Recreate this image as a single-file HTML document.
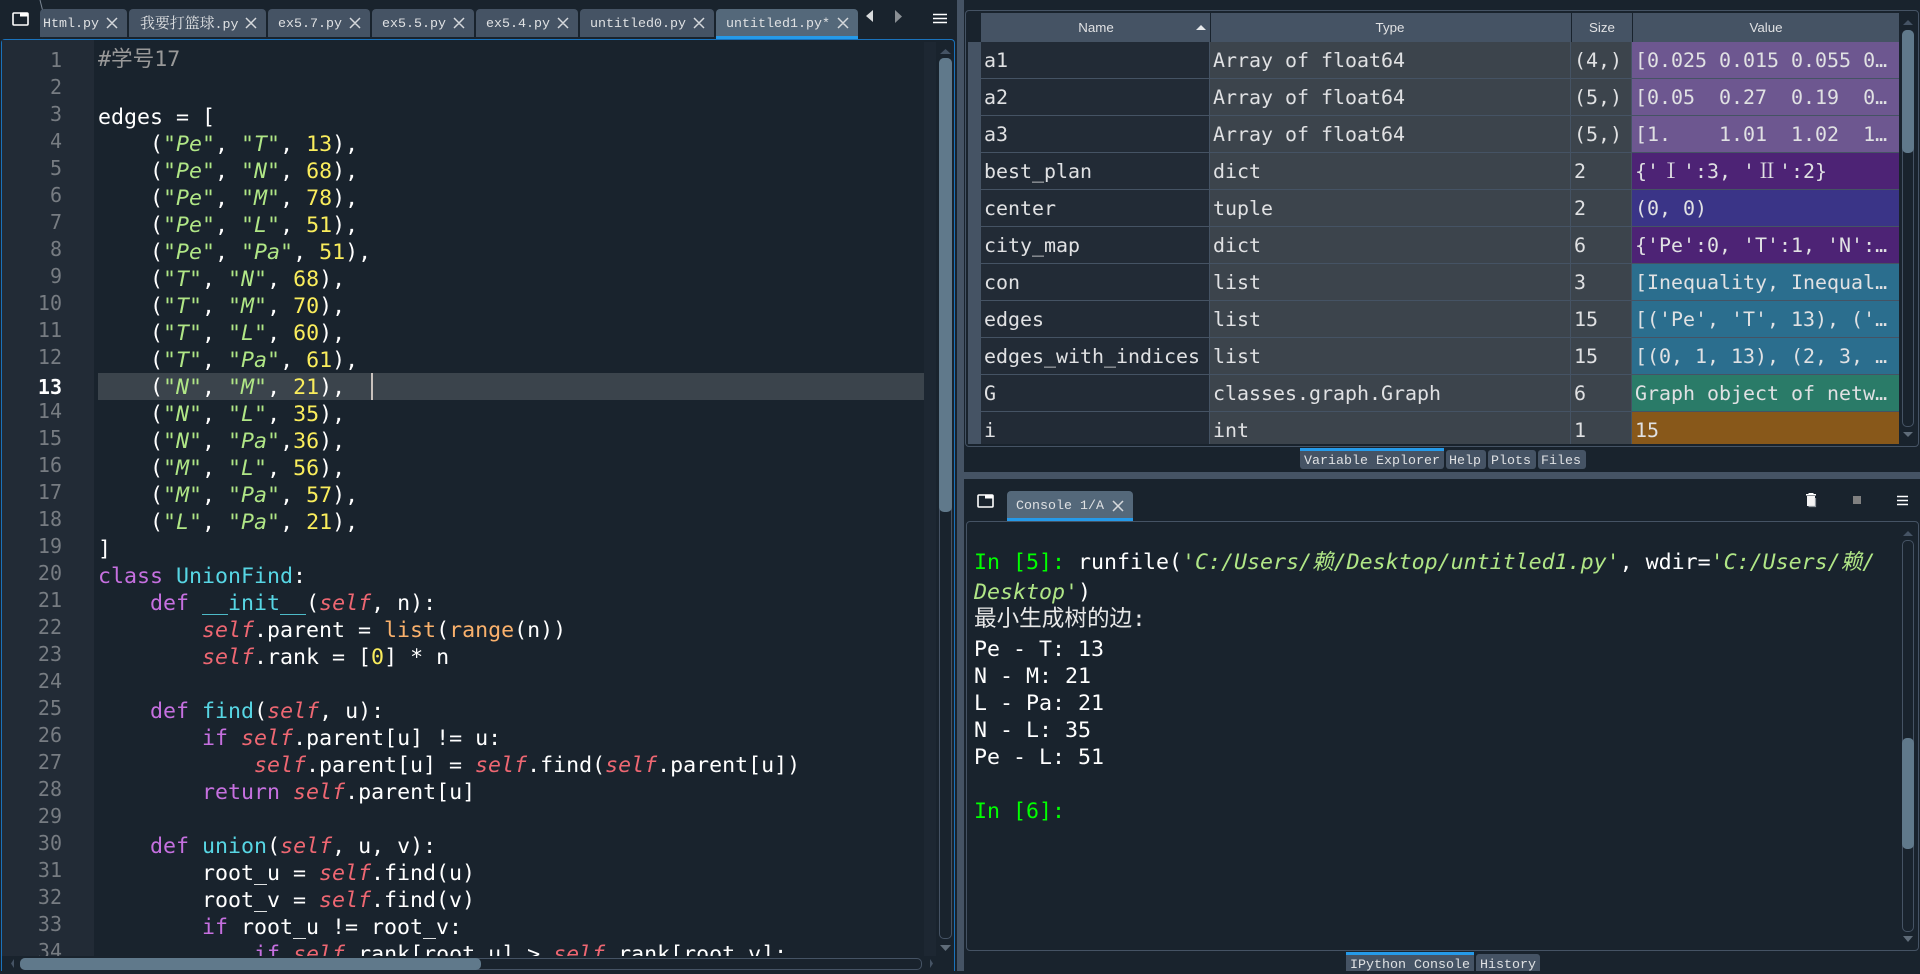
<!DOCTYPE html>
<html><head><meta charset="utf-8"><title>Spyder</title>
<style>
html,body{margin:0;padding:0;background:#19232d;width:1920px;height:971px;overflow:hidden}
.a{position:absolute}
.tab{position:absolute;top:9px;height:28px;background:#455364;border-radius:4px 4px 0 0}
.tt{position:absolute;font:13.33px/16px "Liberation Mono","Noto Serif CJK SC",monospace;color:#dfe1e3;white-space:pre;top:17px}
.btt{position:absolute;font:13.33px/16px "Liberation Mono",monospace;color:#dfe1e3;white-space:pre}
.code{position:absolute;left:98px;top:46px;margin:0;font:21.6px/27px "DejaVu Sans Mono","Noto Sans CJK SC",monospace;color:#fff;white-space:pre}
.ln{position:absolute;left:6px;width:56px;top:46px;margin:0;text-align:right;font:20px/27px "DejaVu Sans Mono",monospace;color:#777c82;white-space:pre}
.k{color:#c670e0}.d{color:#57d6e4}.s{color:#b0e686;font-style:italic}.n{color:#faed5c}.i{color:#ee6772;font-style:italic}.b{color:#fab16c}.c{color:#999}
.cell{position:absolute;font:19.95px/37px "DejaVu Sans Mono",monospace;color:#e0e1e3;white-space:pre}
.rom{display:inline-block;width:24px;text-align:center;font-family:'Noto Serif CJK SC',serif;font-size:21px;line-height:30px}
.hd{position:absolute;top:20px;font:13.33px/16px "Liberation Sans",sans-serif;color:#e0e1e3;transform:translateX(-50%)}
.con{position:absolute;left:974px;font:21.6px/27px "DejaVu Sans Mono","Noto Sans CJK SC",monospace;color:#fff;white-space:pre}
.g{color:#00ff00}
.sb{position:absolute;box-sizing:border-box;border:1px solid #455364;border-radius:5px}
.th{position:absolute;background:#60798b;border-radius:5px}
svg{position:absolute}
</style></head><body>

<!-- top-left pane icon -->
<svg style="left:12px;top:12px" width="17" height="14"><rect x="1" y="1" width="15" height="12" fill="none" stroke="#fff" stroke-width="1.6" rx="1"/><rect x="8" y="1" width="8" height="3.5" fill="#fff"/></svg>
<svg style="left:39px;top:0" width="6" height="38"><path d="M1 0 L4 12 L2 26 L4 37" fill="none" stroke="#7b8794" stroke-width="1"/></svg>

<!-- tabs -->
<div class="tab" style="left:40px;width:87px"></div>
<div class="tab" style="left:129px;width:137px"></div>
<div class="tab" style="left:268px;width:102px"></div>
<div class="tab" style="left:372px;width:102px"></div>
<div class="tab" style="left:476px;width:102px"></div>
<div class="tab" style="left:580px;width:134px"></div>
<div class="tab" style="left:716px;width:142px;height:27px;background:#54687a"></div>
<div class="a" style="left:716px;top:36px;width:142px;height:3px;background:#259ae9"></div>
<div class="tt" style="left:43px">Html.py</div>
<div class="tt" style="left:140px"><span style="font-size:15px;letter-spacing:-.1px">我要打篮球</span>.py</div>
<div class="tt" style="left:278px">ex5.7.py</div>
<div class="tt" style="left:382px">ex5.5.py</div>
<div class="tt" style="left:486px">ex5.4.py</div>
<div class="tt" style="left:590px">untitled0.py</div>
<div class="tt" style="left:726px">untitled1.py*</div>
<svg style="left:0;top:0" width="960" height="40" fill="none" stroke="#d6d9dc" stroke-width="1.5">
<path d="M107 18l10 10M117 18l-10 10M246 18l10 10M256 18l-10 10M350 18l10 10M360 18l-10 10M454 18l10 10M464 18l-10 10M558 18l10 10M568 18l-10 10M694 18l10 10M704 18l-10 10M838 18l10 10M848 18l-10 10"/>
<path d="M873 10v12l-7-6z" fill="#d8dadc" stroke="none"/><path d="M895 10v13l7-6.5z" fill="#8a8f94" stroke="none"/>
<path d="M933 14.5h14M933 18.5h14M933 22.5h14" stroke="#fff" stroke-width="1.6"/>
</svg>

<!-- editor frame -->
<div class="a" style="left:1px;top:39px;width:954px;height:932px;box-sizing:border-box;border:1px solid #1a72bb;border-bottom:0;border-radius:4px 4px 0 0"></div>
<div class="a" style="left:2px;top:40px;width:92px;height:916px;background:#222b36"></div>
<div class="a" style="left:924px;top:42px;width:12px;height:914px;background:#1d2732"></div>
<div class="a" style="left:98px;top:373px;width:826px;height:27px;background:#3b444c"></div>
<div class="a" style="left:371px;top:373px;width:2px;height:27px;background:#c9c2bd"></div>

<div class="a" style="left:0;top:40px;width:924px;height:916px;overflow:hidden">
<pre class="ln" style="top:7px">1
2
3
4
5
6
7
8
9
10
11
12
<b style="color:#fff;position:relative;top:3px">13</b>
14
15
16
17
18
19
20
21
22
23
24
25
26
27
28
29
30
31
32
33
34</pre>
<pre class="code" style="top:6px"><span class="c">#学号17</span></pre>
<pre class="code" style="top:64px">edges = [
    (<span class="s">"Pe"</span>, <span class="s">"T"</span>, <span class="n">13</span>),
    (<span class="s">"Pe"</span>, <span class="s">"N"</span>, <span class="n">68</span>),
    (<span class="s">"Pe"</span>, <span class="s">"M"</span>, <span class="n">78</span>),
    (<span class="s">"Pe"</span>, <span class="s">"L"</span>, <span class="n">51</span>),
    (<span class="s">"Pe"</span>, <span class="s">"Pa"</span>, <span class="n">51</span>),
    (<span class="s">"T"</span>, <span class="s">"N"</span>, <span class="n">68</span>),
    (<span class="s">"T"</span>, <span class="s">"M"</span>, <span class="n">70</span>),
    (<span class="s">"T"</span>, <span class="s">"L"</span>, <span class="n">60</span>),
    (<span class="s">"T"</span>, <span class="s">"Pa"</span>, <span class="n">61</span>),
    (<span class="s">"N"</span>, <span class="s">"M"</span>, <span class="n">21</span>),
    (<span class="s">"N"</span>, <span class="s">"L"</span>, <span class="n">35</span>),
    (<span class="s">"N"</span>, <span class="s">"Pa"</span>,<span class="n">36</span>),
    (<span class="s">"M"</span>, <span class="s">"L"</span>, <span class="n">56</span>),
    (<span class="s">"M"</span>, <span class="s">"Pa"</span>, <span class="n">57</span>),
    (<span class="s">"L"</span>, <span class="s">"Pa"</span>, <span class="n">21</span>),
]
<span class="k">class</span> <span class="d">UnionFind</span>:
    <span class="k">def</span> <span class="d">__init__</span>(<span class="i">self</span>, n):
        <span class="i">self</span>.parent = <span class="b">list</span>(<span class="b">range</span>(n))
        <span class="i">self</span>.rank = [<span class="n">0</span>] * n

    <span class="k">def</span> <span class="d">find</span>(<span class="i">self</span>, u):
        <span class="k">if</span> <span class="i">self</span>.parent[u] != u:
            <span class="i">self</span>.parent[u] = <span class="i">self</span>.find(<span class="i">self</span>.parent[u])
        <span class="k">return</span> <span class="i">self</span>.parent[u]

    <span class="k">def</span> <span class="d">union</span>(<span class="i">self</span>, u, v):
        root_u = <span class="i">self</span>.find(u)
        root_v = <span class="i">self</span>.find(v)
        <span class="k">if</span> root_u != root_v:
            <span class="k">if</span> <span class="i">self</span>.rank[root_u] &gt; <span class="i">self</span>.rank[root_v]:</pre>
</div>

<!-- editor scrollbars -->
<div class="sb" style="left:939px;top:58px;width:13px;height:881px"></div>
<div class="th" style="left:939px;top:58px;width:13px;height:454px"></div>
<svg style="left:0;top:0" width="960" height="971" fill="#455364"><path d="M940 54l5.5-5 5.5 5z"/><path d="M940 945h11l-5.5 6z" fill="#5f6c79"/><path d="M14 959v9l-3-4.5z"/><path d="M930 959v9l3-4.5z"/></svg>
<div class="sb" style="left:20px;top:958px;width:902px;height:12px"></div>
<div class="th" style="left:20px;top:958px;width:461px;height:12px"></div>

<!-- vertical splitter -->
<div class="a" style="left:957px;top:0;width:7px;height:971px;background:#455364"></div>
<!-- horizontal splitter -->
<div class="a" style="left:964px;top:472px;width:956px;height:7px;background:#455364"></div>

<!-- variable explorer -->
<div class="a" style="left:965px;top:10px;width:954px;height:437px;box-sizing:border-box;border:1px solid #455364;border-radius:4px"></div>
<div class="a" style="left:981px;top:13px;width:918px;height:29px;background:#455364"></div>
<div class="a" style="left:1210px;top:13px;width:1px;height:29px;background:#19232d"></div>
<div class="a" style="left:1571px;top:13px;width:1px;height:29px;background:#19232d"></div>
<div class="a" style="left:1632px;top:13px;width:1px;height:29px;background:#19232d"></div>
<div class="hd" style="left:1096px">Name</div>
<div class="hd" style="left:1390px">Type</div>
<div class="hd" style="left:1602px">Size</div>
<div class="hd" style="left:1766px">Value</div>
<svg style="left:1195px;top:24px" width="12" height="7"><path d="M1 6L6 1l5 5z" fill="#e8eaec"/></svg>

<div class="a" style="left:968px;top:42px;width:931px;height:402px;overflow:hidden;background:#3c444c">
<div class="a" style="left:0;top:0;width:13px;height:402px;background:#455364"></div>
<div class="a" style="left:13px;top:0;width:228px;height:402px;background:#222b36"></div>
<div class="a" style="left:664px;top:0;width:267px;height:111px;background:#6d5790"></div>
<div class="a" style="left:664px;top:111px;width:267px;height:37px;background:#4d2375"></div>
<div class="a" style="left:664px;top:148px;width:267px;height:37px;background:#3a3487"></div>
<div class="a" style="left:664px;top:185px;width:267px;height:37px;background:#4d2375"></div>
<div class="a" style="left:664px;top:222px;width:267px;height:111px;background:#2b6e8e"></div>
<div class="a" style="left:664px;top:333px;width:267px;height:37px;background:#2a7b68"></div>
<div class="a" style="left:664px;top:370px;width:267px;height:37px;background:#88581a"></div>
<!-- separators -->
<div class="a" style="left:241px;top:0;width:1px;height:402px;background:#455364"></div>
<div class="a" style="left:602px;top:0;width:1px;height:402px;background:#455364"></div>
<div class="a" style="left:663px;top:0;width:1px;height:402px;background:#455364"></div>
<div class="a" style="left:0;top:36px;width:931px;height:1px;background:#455364"></div>
<div class="a" style="left:0;top:73px;width:931px;height:1px;background:#455364"></div>
<div class="a" style="left:0;top:110px;width:931px;height:1px;background:#455364"></div>
<div class="a" style="left:0;top:147px;width:931px;height:1px;background:#455364"></div>
<div class="a" style="left:0;top:184px;width:931px;height:1px;background:#455364"></div>
<div class="a" style="left:0;top:221px;width:931px;height:1px;background:#455364"></div>
<div class="a" style="left:0;top:258px;width:931px;height:1px;background:#455364"></div>
<div class="a" style="left:0;top:295px;width:931px;height:1px;background:#455364"></div>
<div class="a" style="left:0;top:332px;width:931px;height:1px;background:#455364"></div>
<div class="a" style="left:0;top:369px;width:931px;height:1px;background:#455364"></div>

<div class="cell" style="left:16px;top:0">a1</div><div class="cell" style="left:245px;top:0">Array of float64</div><div class="cell" style="left:606px;top:0">(4,)</div><div class="cell" style="left:667px;top:0">[0.025 0.015 0.055 0…</div>
<div class="cell" style="left:16px;top:37px">a2</div><div class="cell" style="left:245px;top:37px">Array of float64</div><div class="cell" style="left:606px;top:37px">(5,)</div><div class="cell" style="left:667px;top:37px">[0.05  0.27  0.19  0…</div>
<div class="cell" style="left:16px;top:74px">a3</div><div class="cell" style="left:245px;top:74px">Array of float64</div><div class="cell" style="left:606px;top:74px">(5,)</div><div class="cell" style="left:667px;top:74px">[1.    1.01  1.02  1…</div>
<div class="cell" style="left:16px;top:111px">best_plan</div><div class="cell" style="left:245px;top:111px">dict</div><div class="cell" style="left:606px;top:111px">2</div><div class="cell" style="left:667px;top:111px">{'<span class="rom">Ⅰ</span>':3, '<span class="rom">Ⅱ</span>':2}</div>
<div class="cell" style="left:16px;top:148px">center</div><div class="cell" style="left:245px;top:148px">tuple</div><div class="cell" style="left:606px;top:148px">2</div><div class="cell" style="left:667px;top:148px">(0, 0)</div>
<div class="cell" style="left:16px;top:185px">city_map</div><div class="cell" style="left:245px;top:185px">dict</div><div class="cell" style="left:606px;top:185px">6</div><div class="cell" style="left:667px;top:185px">{'Pe':0, 'T':1, 'N':…</div>
<div class="cell" style="left:16px;top:222px">con</div><div class="cell" style="left:245px;top:222px">list</div><div class="cell" style="left:606px;top:222px">3</div><div class="cell" style="left:667px;top:222px">[Inequality, Inequal…</div>
<div class="cell" style="left:16px;top:259px">edges</div><div class="cell" style="left:245px;top:259px">list</div><div class="cell" style="left:606px;top:259px">15</div><div class="cell" style="left:667px;top:259px">[('Pe', 'T', 13), ('…</div>
<div class="cell" style="left:16px;top:296px">edges_with_indices</div><div class="cell" style="left:245px;top:296px">list</div><div class="cell" style="left:606px;top:296px">15</div><div class="cell" style="left:667px;top:296px">[(0, 1, 13), (2, 3, …</div>
<div class="cell" style="left:16px;top:333px">G</div><div class="cell" style="left:245px;top:333px">classes.graph.Graph</div><div class="cell" style="left:606px;top:333px">6</div><div class="cell" style="left:667px;top:333px">Graph object of netw…</div>
<div class="cell" style="left:16px;top:370px">i</div><div class="cell" style="left:245px;top:370px">int</div><div class="cell" style="left:606px;top:370px">1</div><div class="cell" style="left:667px;top:370px">15</div>
</div>

<!-- table scrollbar -->
<div class="sb" style="left:1902px;top:30px;width:12px;height:397px"></div>
<div class="th" style="left:1902px;top:30px;width:12px;height:123px"></div>
<svg style="left:0;top:0" width="1920" height="971"><path d="M1903 25l5-5 5 5z" fill="#455364"/><path d="M1903 432h10l-5 5z" fill="#5f6c79"/><path d="M1903 536l5-5 5 5z" fill="#455364"/><path d="M1903 936h10l-5 6z" fill="#5f6c79"/></svg>

<!-- explorer tabs -->
<div class="a" style="left:1300px;top:448px;width:144px;height:21px;background:#455364;border-radius:0 0 3px 3px;border-top:3px solid #259ae9;box-sizing:border-box"></div>
<div class="a" style="left:1446px;top:450px;width:40px;height:19px;background:#455364;border-radius:3px"></div>
<div class="a" style="left:1488px;top:450px;width:48px;height:19px;background:#455364;border-radius:3px"></div>
<div class="a" style="left:1538px;top:450px;width:48px;height:19px;background:#455364;border-radius:3px"></div>
<div class="btt" style="left:1304px;top:454px">Variable Explorer</div>
<div class="btt" style="left:1449px;top:454px">Help</div>
<div class="btt" style="left:1491px;top:454px">Plots</div>
<div class="btt" style="left:1541px;top:454px">Files</div>

<!-- console toolbar -->
<svg style="left:977px;top:494px" width="17" height="14"><rect x="1" y="1" width="15" height="12" fill="none" stroke="#fff" stroke-width="1.6" rx="1"/><rect x="8" y="1" width="8" height="3.5" fill="#fff"/></svg>
<div class="a" style="left:1007px;top:491px;width:126px;height:30px;background:#54687a;border-radius:4px 4px 0 0"></div>
<div class="a" style="left:1007px;top:518px;width:126px;height:3px;background:#259ae9"></div>
<div class="btt" style="left:1016px;top:499px">Console 1/A</div>
<svg style="left:1112px;top:500px" width="12" height="12"><path d="M1 1l10 10M11 1L1 11" stroke="#d6d9dc" stroke-width="1.5"/></svg>
<svg style="left:1806px;top:493px" width="12" height="15"><path d="M2.5 0h5v1h2.5v1.5H0V1h2.5z" fill="#fff"/><path d="M1 3h8v10H1z" fill="#f4f4f4"/><path d="M9.5 5v8.5H2.5" fill="none" stroke="#8f969d" stroke-width="1.2"/></svg>
<div class="a" style="left:1853px;top:496px;width:8px;height:8px;background:#808080"></div>
<svg style="left:1896px;top:495px" width="13" height="11"><path d="M1 1.5h11M1 5.5h11M1 9.5h11" stroke="#fff" stroke-width="1.4"/></svg>

<!-- console -->
<div class="a" style="left:966px;top:521px;width:953px;height:430px;box-sizing:border-box;border:1px solid #455364;border-radius:4px"></div>
<div class="con" style="top:549px"><span class="g">In [5]:</span> runfile(<span class="s">'C:/Users/赖/Desktop/untitled1.py'</span>, wdir=<span class="s">'C:/Users/赖/</span></div>
<div class="con" style="top:579px"><span class="s">Desktop'</span>)</div>
<div class="con" style="top:606px;font-size:22.6px;color:#e8e8e8">最小生成树的边:</div>
<div class="con" style="top:636px">Pe - T: 13</div>
<div class="con" style="top:663px">N - M: 21</div>
<div class="con" style="top:690px">L - Pa: 21</div>
<div class="con" style="top:717px">N - L: 35</div>
<div class="con" style="top:744px">Pe - L: 51</div>
<div class="con" style="top:798px"><span class="g">In [6]:</span></div>
<div class="sb" style="left:1902px;top:540px;width:12px;height:392px"></div>
<div class="th" style="left:1902px;top:738px;width:12px;height:111px"></div>

<!-- console bottom tabs -->
<div class="a" style="left:1346px;top:952px;width:128px;height:19px;background:#455364;border-top:3px solid #259ae9;box-sizing:border-box"></div>
<div class="a" style="left:1476px;top:954px;width:64px;height:17px;background:#455364;border-radius:3px 3px 0 0"></div>
<div class="btt" style="left:1350px;top:958px">IPython Console</div>
<div class="btt" style="left:1480px;top:958px">History</div>
</body></html>
